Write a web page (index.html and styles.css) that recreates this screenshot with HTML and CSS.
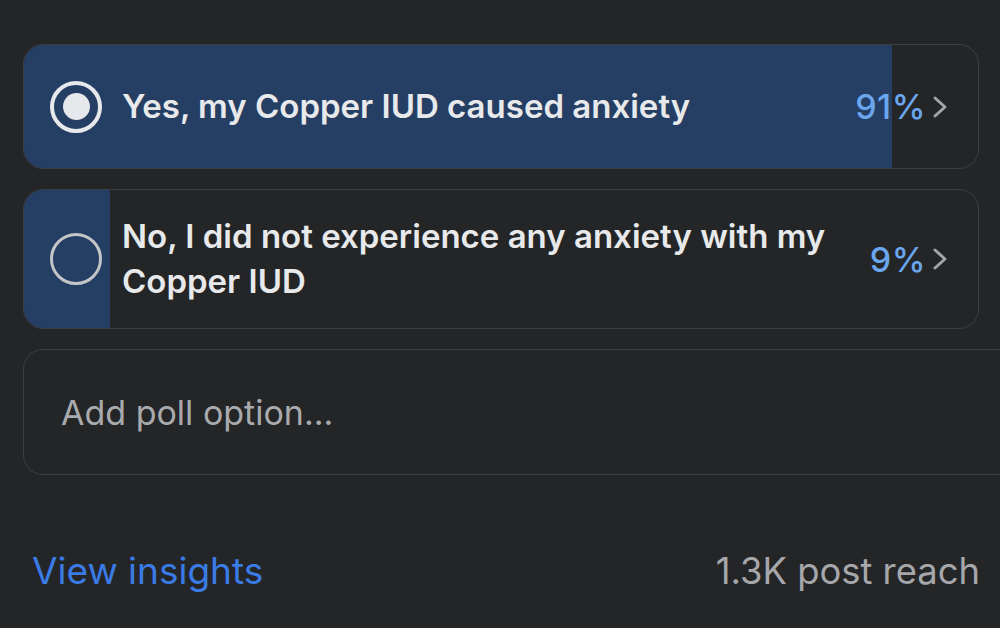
FILE: index.html
```html
<!DOCTYPE html>
<html>
<head>
<meta charset="utf-8">
<link rel="stylesheet" href="styles.css">
</head>
<body>
<div class="poll">
  <div class="option">
    <div class="fill" style="width:91%"></div>
    <div class="radio checked"><span class="dot"></span></div>
    <div class="label">Yes, my Copper IUD caused anxiety</div>
    <div class="pct">91%</div>
    <svg class="chev" viewBox="0 0 16 24" width="16" height="24"><path d="M3 3 L13 12 L3 21" fill="none" stroke="#a3a4a6" stroke-width="3" stroke-linecap="round" stroke-linejoin="round"/></svg>
  </div>
  <div class="option tall">
    <div class="fill" style="width:9%"></div>
    <div class="radio"></div>
    <div class="label">No, I did not experience any anxiety with my Copper IUD</div>
    <div class="pct">9%</div>
    <svg class="chev" viewBox="0 0 16 24" width="16" height="24"><path d="M3 3 L13 12 L3 21" fill="none" stroke="#a3a4a6" stroke-width="3" stroke-linecap="round" stroke-linejoin="round"/></svg>
  </div>
  <div class="add">Add poll option...</div>
  <div class="footer">
    <span class="insights">View insights</span>
    <span class="reach">1.3K post reach</span>
  </div>
</div>
</body>
</html>
```
FILE: styles.css
```css
html, body {
  margin: 0;
  padding: 0;
  background: #242527;
  width: 1000px;
  height: 628px;
  overflow: hidden;
}
body {
  font-family: Inter, "Liberation Sans", sans-serif;
}
.poll {
  padding: 44px 0 0 23px;
  display: flex;
  flex-direction: column;
  gap: 20px;
}
.option {
  position: relative;
  width: 956px;
  height: 125px;
  box-sizing: border-box;
  border: 1.5px solid #3d3e41;
  border-radius: 20px;
  overflow: hidden;
  display: flex;
  align-items: center;
  padding: 0 30px 0 26px;
}
.option.tall {
  height: 140px;
}
.fill {
  position: absolute;
  left: 0;
  top: 0;
  bottom: 0;
  background: #253e63;
}
.radio {
  position: relative;
  width: 52px;
  height: 52px;
  box-sizing: border-box;
  border-radius: 50%;
  border: 3px solid #c3c5c8;
  flex: none;
  display: flex;
  align-items: center;
  justify-content: center;
}
.radio.checked {
  border: 4px solid #e6e8eb;
}
.dot {
  width: 27px;
  height: 27px;
  border-radius: 50%;
  background: #e6e8eb;
}
.label {
  position: relative;
  flex: 1;
  margin-left: 20px;
  color: #e8e9eb;
  font-size: 33px;
  font-weight: 600;
  line-height: 45px;
  padding-right: 30px;
}
.pct {
  position: relative;
  color: #6aa6ee;
  font-size: 34px;
  font-weight: 500;
  letter-spacing: 0.5px;
  margin-right: 6px;
}
.chev {
  position: relative;
  flex: none;
}
.add {
  width: 1000px;
  height: 126px;
  box-sizing: border-box;
  border: 1.5px solid #3d3e41;
  border-radius: 20px;
  display: flex;
  align-items: center;
  padding-left: 37px;
  color: #a9aaad;
  font-size: 34px;
}
.footer {
  display: flex;
  justify-content: space-between;
  align-items: center;
  margin-top: 53px;
  padding: 0 20px 0 9px;
}
.insights {
  color: #3a7be6;
  font-size: 37px;
}
.reach {
  color: #a6a7aa;
  font-size: 36.4px;
}
```
